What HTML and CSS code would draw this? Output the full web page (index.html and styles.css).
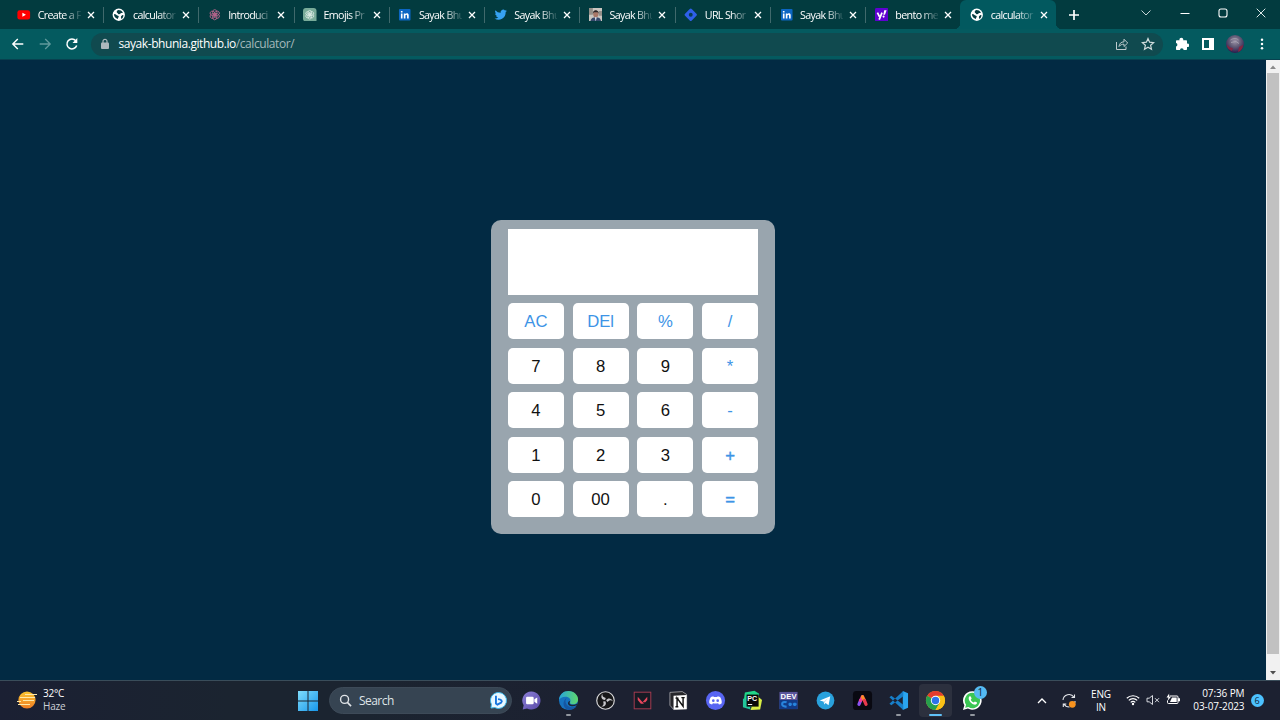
FILE: index.html
```html
<!DOCTYPE html>
<html lang="en">
<head>
<meta charset="utf-8">
<title>calculator</title>
<link rel="stylesheet" href="styles.css">
</head>
<body>
<svg class="defs" width="0" height="0">
  <defs>
    <linearGradient id="win" x1="0" y1="0" x2="1" y2="1"><stop offset="0" stop-color="#7fdcfb"/><stop offset="1" stop-color="#1796ea"/></linearGradient>
    <linearGradient id="sun" x1="0" y1="0" x2="0" y2="1"><stop offset="0" stop-color="#fbc531"/><stop offset="1" stop-color="#ee7d24"/></linearGradient>
    <linearGradient id="chat" x1="0" y1="0" x2="1" y2="1"><stop offset="0" stop-color="#8b7fd6"/><stop offset="1" stop-color="#5a4aa8"/></linearGradient>
    <linearGradient id="edgeTop" x1="0" y1="0" x2="1" y2="0"><stop offset="0" stop-color="#27a5dc"/><stop offset="1" stop-color="#5fd86b"/></linearGradient>
    <radialGradient id="avatar" cx=".5" cy=".35" r=".65"><stop offset="0" stop-color="#9d94a8"/><stop offset=".45" stop-color="#655e78"/><stop offset="1" stop-color="#281b4c"/></radialGradient>
    <symbol id="x" viewBox="0 0 8 8"><path d="M1 1l6 6M7 1L1 7" stroke="#fff" stroke-width="1.3" fill="none"/></symbol>
    <symbol id="globe" viewBox="0 0 14 14"><circle cx="7" cy="7" r="6.400" fill="#fff"/><path d="M2 6.300c1.200.2 2.200.4 3 1.200.7.7 2 .4 2 1.400 0 .8-.8 1-.8 2.500C3.700 11 2 9 2 6.300zM6.600 2.200c2 0 3.700.8 4.700 2.600-.8.300-1.500 0-2 .5-.7.700-1.200 1.500-2.300 1.200-.9-.2-.6-1.100-1.500-1.300-1.200-.3-.7-2.600 1.100-3zM11.800 7.200c.2 1.900-.8 3.500-2.300 4.200.5-1-.6-1.500-.2-2.500.4-1 1.300-1.700 2.500-1.700z" fill="#063c40"/></symbol>
    <symbol id="in" viewBox="0 0 14 14"><rect x="1" y="1" width="12" height="12" rx="1" fill="#0c66c3"/><path d="M3 5.600h1.700V11H3zM3 3h1.700v1.600H3zM6 5.600h1.600v.7c1-1.300 3.500-1 3.500 1.300V11H9.400V8c0-1.400-1.700-1.300-1.700 0v3H6z" fill="#fff"/></symbol>
    <symbol id="knot" viewBox="0 0 14 14"><g fill="none" stroke="currentColor" stroke-width=".9"><ellipse cx="7" cy="4.700" rx="2.300" ry="3"/><ellipse cx="7" cy="4.700" rx="2.300" ry="3" transform="rotate(60 7 7)"/><ellipse cx="7" cy="4.700" rx="2.300" ry="3" transform="rotate(120 7 7)"/><ellipse cx="7" cy="4.700" rx="2.300" ry="3" transform="rotate(180 7 7)"/><ellipse cx="7" cy="4.700" rx="2.300" ry="3" transform="rotate(240 7 7)"/><ellipse cx="7" cy="4.700" rx="2.300" ry="3" transform="rotate(300 7 7)"/></g></symbol>
  </defs>
</svg>

<header class="tabstrip">
  <div class="tab"><svg class="fav" viewBox="0 0 14 14"><rect x=".4" y="2.300" width="13.200" height="9.600" rx="2.300" fill="#f00"/><path d="M5.600 5l3.700 2.100-3.700 2.100z" fill="#fff"/></svg><span class="label">Create a F</span><svg class="close"><use href="#x"/></svg></div>
  <div class="tab"><svg class="fav"><use href="#globe"/></svg><span class="label">calculator</span><svg class="close"><use href="#x"/></svg></div>
  <div class="tab"><svg class="fav pink"><use href="#knot"/></svg><span class="label">Introduci</span><svg class="close"><use href="#x"/></svg></div>
  <div class="tab"><svg class="fav mint" viewBox="0 0 14 14"><path d="M3 0h8a3 3 0 0 1 3 3v11H3a3 3 0 0 1-3-3V3a3 3 0 0 1 3-3z" fill="#78ab99"/><use href="#knot" x="1" y="1" width="12" height="12"/></svg><span class="label">Emojis Pr</span><svg class="close"><use href="#x"/></svg></div>
  <div class="tab"><svg class="fav"><use href="#in"/></svg><span class="label">Sayak Bhu</span><svg class="close"><use href="#x"/></svg></div>
  <div class="tab"><svg class="fav" viewBox="0 0 24 24"><path d="M23 5.100a9 9 0 0 1-2.600.7 4.500 4.500 0 0 0 2-2.500 9 9 0 0 1-2.900 1.100 4.500 4.500 0 0 0-7.700 4.100A12.800 12.800 0 0 1 2.500 3.800a4.500 4.500 0 0 0 1.400 6 4.500 4.500 0 0 1-2-.6 4.500 4.500 0 0 0 3.600 4.500 4.500 4.500 0 0 1-2 .1 4.500 4.500 0 0 0 4.200 3.100A9 9 0 0 1 1 18.800 12.800 12.800 0 0 0 20.700 7.400 9 9 0 0 0 23 5.100z" fill="#36a2f2"/></svg><span class="label">Sayak Bhu</span><svg class="close"><use href="#x"/></svg></div>
  <div class="tab"><svg class="fav" viewBox="0 0 14 14"><rect width="14" height="14" fill="#c9c6c0"/><path d="M0 0h4v7H0zM10 3h4v5h-4z" fill="#938f88"/><path d="M1.500 14c.2-3.500 2.600-4.500 5.500-4.500s5.300 1 5.500 4.500z" fill="#35496b"/><ellipse cx="7" cy="6.300" rx="2.700" ry="3.600" fill="#a87868"/><path d="M4 6c-.4-5 6.400-5 6 0L9 4.300H5z" fill="#292629"/><path d="M6 9.600h2L7 14z" fill="#e3e6ef"/></svg><span class="label">Sayak Bhu</span><svg class="close"><use href="#x"/></svg></div>
  <div class="tab"><svg class="fav" viewBox="0 0 14 14"><rect x="2.100" y="2.100" width="9.800" height="9.800" rx="1.500" transform="rotate(45 7 7)" fill="#2f5fe8"/><circle cx="7" cy="7" r="2" fill="#063b52"/></svg><span class="label">URL Shor</span><svg class="close"><use href="#x"/></svg></div>
  <div class="tab"><svg class="fav"><use href="#in"/></svg><span class="label">Sayak Bhu</span><svg class="close"><use href="#x"/></svg></div>
  <div class="tab"><svg class="fav" viewBox="0 0 14 14"><rect width="14" height="14" rx="1.500" fill="#5f01d1"/><path d="M2.500 4.800l2.100 4.200M7.300 4.800L4.300 12" stroke="#fff" stroke-width="1.800" fill="none"/><path d="M9.600 2.300h2.500L10.300 7H8.600z" fill="#fff"/><circle cx="8.900" cy="8.900" r="1.100" fill="#fff"/></svg><span class="label">bento me</span><svg class="close"><use href="#x"/></svg></div>
  <div class="tab active"><svg class="fav"><use href="#globe"/></svg><span class="label">calculator</span><svg class="close"><use href="#x"/></svg></div>
  <svg class="plus" viewBox="0 0 12 12"><path d="M6 1v10M1 6h10" stroke="#fff" stroke-width="1.700"/></svg>
  <div class="window-buttons">
    <svg viewBox="0 0 12 12"><path d="M1.500 3.500L6 8l4.500-4.500" fill="none" stroke="#c5d5d6"/></svg>
    <svg viewBox="0 0 12 12"><path d="M1.500 6.500h9" stroke="#fff"/></svg>
    <svg viewBox="0 0 12 12"><rect x="2" y="2" width="8" height="8" rx="2" fill="none" stroke="#fff" stroke-width="1.100"/></svg>
    <svg viewBox="0 0 12 12"><path d="M1.700 1.700l8.600 8.600M10.300 1.700l-8.600 8.600" stroke="#dce6e6"/></svg>
  </div>
</header>

<nav class="toolbar">
  <div class="nav-buttons">
    <svg viewBox="0 0 14 14"><path d="M12.300 7H2M6.800 2L1.800 7l5 5" fill="none" stroke="#fff" stroke-width="1.400"/></svg>
    <svg viewBox="0 0 14 14"><path d="M1.700 7H12M7.200 2l5 5-5 5" fill="none" stroke="#609a9d" stroke-width="1.300"/></svg>
    <svg viewBox="0 0 14 14"><path d="M11.700 8.500a5 5 0 1 1-.9-4.800" fill="none" stroke="#fff" stroke-width="1.500"/><path d="M12.300 1v5H7.500z" fill="#fff"/></svg>
  </div>
  <div class="omnibox">
    <svg class="lock" viewBox="0 0 10 12"><rect x="1" y="4.500" width="8" height="6.500" rx="1" fill="#abb8bd"/><path d="M3 5V3.300a2 2 0 0 1 4 0V5" fill="none" stroke="#abb8bd" stroke-width="1.200"/></svg>
    <span class="url">sayak-bhunia.github.io<span class="path">/calculator/</span></span>
    <svg class="share" viewBox="0 0 14 14"><path d="M1.500 5v7.500h9.500V9.500M4 9.500c.4-3 2-4.600 5-4.700V2.200L12.700 6 9 9.500V7.200c-2 0-3.700.6-5 2.300z" fill="none" stroke="#bdcbcd" stroke-width="1"/></svg>
    <svg class="star" viewBox="0 0 14 14"><path d="M7 1.500l1.600 3.700 4 .4-3 2.700.9 4L7 10.200l-3.500 2.100.9-4-3-2.700 4-.4z" fill="none" stroke="#d0dcdc" stroke-width="1.200"/></svg>
  </div>
  <div class="actions">
    <svg viewBox="0 0 14 14"><path d="M1 4.200c0-.6.400-1 1-1h2.500a1.900 1.900 0 1 1 3.700 0H11c.6 0 1 .4 1 1v2.500a1.700 1.700 0 1 1 0 3.300v2c0 .6-.4 1-1 1H8.600a1.800 1.800 0 0 0-3.600 0H2c-.6 0-1-.4-1-1V9.600a1.800 1.800 0 0 0 0-3.500z" fill="#fff"/></svg>
    <svg viewBox="0 0 14 14"><path d="M1 1h12v12H1zM3 3v8h5V3z" fill="#fff" fill-rule="evenodd"/></svg>
    <svg class="avatar" viewBox="0 0 18 18"><circle cx="9" cy="9" r="9" fill="url(#avatar)"/><path d="M1 10c2 1 3 3 6 3l-1 3C3 15 1 13 1 10zM13 12l4-2c0 3-2 6-5 7z" fill="#842741"/><path d="M4.500 5c3-2 6-2 8 0M5 7.500l5-1 3 2" fill="none" stroke="#aaa5b3" stroke-width=".8"/></svg>
    <svg viewBox="0 0 14 14"><g fill="#fff"><circle cx="7" cy="2.700" r="1.250"/><circle cx="7" cy="7" r="1.250"/><circle cx="7" cy="11.300" r="1.250"/></g></svg>
  </div>
</nav>

<main class="page">
  <section class="stage">
    <div class="calculator">
      <div class="display"></div>
      <div class="keys">
        <button class="op">AC</button><button class="op">DEl</button><button class="op">%</button><button class="op">/</button>
        <button>7</button><button>8</button><button>9</button><button class="op">*</button>
        <button>4</button><button>5</button><button>6</button><button class="op">-</button>
        <button>1</button><button>2</button><button>3</button><button class="op bold">+</button>
        <button>0</button><button>00</button><button>.</button><button class="op bold">=</button>
      </div>
    </div>
  </section>
  <aside class="scrollbar">
    <svg viewBox="0 0 14 14"><path d="M4 9l3-3.500L10 9z" fill="#8a8a8a"/></svg>
    <div class="thumb"></div>
    <svg viewBox="0 0 14 14"><path d="M4 5l3 3.500L10 5z" fill="#505050"/></svg>
  </aside>
</main>

<footer class="taskbar">
  <div class="weather">
    <svg viewBox="0 0 20 20"><circle cx="10" cy="10" r="8.600" fill="url(#sun)"/><path d="M8 4.500h12M3 7.500h15M0 11.500h4M6 10.500h11M1 14.500h12" stroke="#ffe9a8" stroke-width="1.200"/></svg>
    <div class="weather-text"><span>32°C</span><span class="dim">Haze</span></div>
  </div>
  <svg class="start" viewBox="0 0 20 20"><path d="M0 0h9.500v9.500H0zM10.500 0H20v9.500h-9.500zM0 10.500h9.500V20H0zM10.500 10.500H20V20h-9.500z" fill="url(#win)"/></svg>
  <div class="search">
    <svg class="lens" viewBox="0 0 14 14"><circle cx="6" cy="5.800" r="4.300" fill="none" stroke="#e0e4e8" stroke-width="1.500"/><path d="M9 9l4 4" stroke="#e0e4e8" stroke-width="1.700"/></svg>
    <span>Search</span>
    <svg class="bing" viewBox="0 0 18 18"><path d="M9 .5a8.500 8.500 0 1 1-4 16L1 17l.5-4A8.500 8.500 0 0 1 9 .5z" fill="#e8f8ff" stroke="#36b7ed"/><path d="M6.300 4v8.300l1.500 1 4-2c1.700-1.600.1-3.500-3.300-3.800" fill="none" stroke="#1876df" stroke-width="2"/></svg>
  </div>
  <div class="apps">
    <div class="app"><svg viewBox="0 0 22 22"><path d="M11 1.500a9.500 9.500 0 1 1-4.700 17.800L1.800 20.500l1-4.500A9.500 9.500 0 0 1 11 1.500z" fill="url(#chat)"/><rect x="5.300" y="7.200" width="8" height="7.700" rx="1.300" fill="#fff"/><path d="M14 9.800l3-2v6.500l-3-2z" fill="#fff"/></svg></div>
    <div class="app running"><svg viewBox="0 0 22 22"><circle cx="11" cy="11" r="10" fill="#1672bf"/><path d="M1 10.500C1.500 4.500 5.600 1 11 1c6 0 10 4.500 10 8.800 0 3.400-2.300 5.200-5 5.200-2.300 0-4-.9-3.300-2.200C14 9.800 11.800 7 7.800 7 4.500 7 2 8.600 1 10.500z" fill="url(#edgeTop)"/><path d="M9 8.500c-3 4 .3 9.700 5.400 9.700 2 0 3.700-.5 5-1.500-1.500 2.800-5 4.500-8.400 4.300-6-.9-7-9.500-2-12.500z" fill="#1556a2"/><path d="M12.500 11.500c.3 1-.6 1.500-.4 2.300.5 1.700 4.300 2.500 8.400.3-.3.700-.7 1.400-1.200 2-4.200 2.300-9.700.3-8.700-3 .3-1 1-1.500 1.900-1.600z" fill="#1c2433"/></svg></div>
    <div class="app"><svg viewBox="0 0 22 22"><circle cx="11" cy="11" r="9.200" fill="#171719" stroke="#d8d8da" stroke-width="1.200"/><g fill="#c8c8cc"><path id="blade" d="M10.500 10.500C7 10.500 5.500 7 7.800 4c-.4 2.500.6 3.800 3.500 4.300z"/><use href="#blade" transform="rotate(120 11 11)"/><use href="#blade" transform="rotate(240 11 11)"/></g></svg></div>
    <div class="app"><svg viewBox="0 0 22 22"><rect x="2.300" y="2.300" width="17.400" height="17.400" fill="#151a24" stroke="#a83c50" stroke-width="1"/><path d="M6 7l6.500 7.500H9.300L6 10.500zM16 7v3.500l-2 2.400h-3z" fill="#e8465c"/></svg></div>
    <div class="app"><svg viewBox="0 0 22 22"><path d="M2 2.500l13-.8 4.500 3V20L6 20.500 2 16z" fill="#26262a" stroke="#c9c9cb" stroke-width=".7"/><path d="M5.800 6l13.700-.8V20L5.800 20.500z" fill="#fff"/><path d="M9.500 17.500v-9l6.300 8.500V8M7.800 8.500H11M14 8h3.500M7.800 17.500h3" fill="none" stroke="#111" stroke-width="1.500"/></svg></div>
    <div class="app"><svg viewBox="0 0 22 22"><circle cx="11" cy="11" r="10" fill="#5865f2"/><path d="M8.700 6.500l.5.900c1.200-.2 2.400-.2 3.600 0l.5-.9 2.500.8c1.300 2 2 4.300 1.700 6.500-1 .8-2 1.200-2.900 1.500l-.9-1.500c-1.800.6-3.600.6-5.400 0l-.9 1.500c-1-.3-2-.8-2.900-1.500-.2-2.200.3-4.500 1.700-6.500z" fill="#fff"/><circle cx="8.700" cy="11.200" r="1.400" fill="#5865f2"/><circle cx="13.300" cy="11.200" r="1.400" fill="#5865f2"/></svg></div>
    <div class="app"><svg viewBox="0 0 22 22"><path d="M3 2.500L13 .8l5 3-2 14.500L1 17z" fill="#21d789"/><path d="M17 7l4 3.500-2 10-10 .5 3-9z" fill="#d8ef45"/><path d="M1 9l6 2 2 9.500L1 18z" fill="#22c59a"/><rect x="4.800" y="4.800" width="12.600" height="12.600" fill="#090909"/><text class="pc" x="5.600" y="11.500">PC</text><path d="M6.200 15.200h4.500" stroke="#fff"/></svg></div>
    <div class="app"><svg viewBox="0 0 22 22"><rect x="1.500" y="2" width="19" height="18" fill="#5a559c"/><path d="M1.500 10.500h19V20h-19z" fill="#123a86"/><text class="dev" x="2.500" y="9.500" textLength="17">DEV</text><path d="M9 12.900c-6-2-6.500 5.400 0 4.400M11 15h3.500M12.700 13.300v3.500M15.500 15h4M17.500 13.300v3.500" fill="none" stroke="#2884dd" stroke-width="2.200"/></svg></div>
    <div class="app"><svg viewBox="0 0 22 22"><circle cx="11" cy="11" r="9.300" fill="#29a1dc"/><path d="M5 10.900l11-4.300-1.800 9.300-3-2.200-1.700 1.500-.3-3-1.400-.5z" fill="#fff"/><path d="M9.200 12.200l4.300-3.500-3.300 4.200-.6 2.100z" fill="#b9dcef"/></svg></div>
    <div class="app"><svg viewBox="0 0 22 22"><rect x="1" y="1" width="20" height="20" rx="3.500" fill="#090911"/><g fill="none" stroke-width="3.400" stroke-linecap="round"><path d="M7.300 15L9 11" stroke="#8b52f3"/><path d="M9 11l2-4" stroke="#ee3c9a"/><path d="M11 7l2 4" stroke="#ff8a2a"/><path d="M13 11l1.700 4" stroke="#e83a4c"/></g></svg></div>
    <div class="app running"><svg viewBox="0 0 22 22"><path d="M15.500 1l5.500 2.500v15L15.500 21z" fill="#2aa5ef"/><path d="M1.500 7.500L3.500 6 16 15.500V21zM1.500 14.500l2 1.500L16 6.500V1z" fill="#177fc9"/></svg></div>
    <div class="app current"><svg viewBox="0 0 22 22"><circle cx="11" cy="11" r="10" fill="#fbc116"/><path d="M11 11L2.340 6A10 10 0 0 1 19.660 6z" fill="#e33b2e"/><path d="M11 11L2.340 6A10 10 0 0 0 11 21l4.300-7.500z" fill="#269f4d"/><path d="M11 6h8.660A10 10 0 0 1 11 21l4.300-7.500z" fill="#fbc116"/><circle cx="11" cy="11" r="4.900" fill="#fff"/><circle cx="11" cy="11" r="3.900" fill="#2d72e9"/></svg></div>
    <div class="app running"><svg viewBox="0 0 22 22"><path d="M11 1.300A9.700 9.700 0 1 1 6.200 19.500L1 21l1.500-5A9.700 9.700 0 0 1 11 1.300z" fill="#fff"/><path d="M11 3a8 8 0 1 1-4.300 14.800L3.300 18.700l1-3.200A8 8 0 0 1 11 3z" fill="#3bc653"/><path d="M8 6.500c-2.700 2 .7 7.600 4.500 8.700 2 .5 3.200-.5 3.300-2.200l-2.300-1-1.200 1.200c-1.500-.6-2.500-1.700-3.100-3L10.100 9 9.200 6.700z" fill="#fff"/></svg><span class="badge">1</span></div>
  </div>
  <div class="tray">
    <svg class="chevron" viewBox="0 0 12 12"><path d="M2 8l4-4 4 4" fill="none" stroke="#fff" stroke-width="1.300"/></svg>
    <svg class="sync" viewBox="0 0 16 16"><path d="M2 7a6 6 0 0 1 11-2.800M13.500 1.500v3h-3M14 8a6 6 0 0 1-.3 2M8.500 14A6 6 0 0 1 3 11M2.300 14v-3h3" fill="none" stroke="#e4e6ea" stroke-width="1.100"/><circle cx="11.300" cy="11.300" r="3.400" fill="#f7931e"/></svg>
    <div class="lang"><span>ENG</span><span>IN</span></div>
    <div class="status">
      <svg viewBox="0 0 14 14"><path d="M.8 5.300a8.800 8.800 0 0 1 12.400 0M2.800 7.400a6 6 0 0 1 8.400 0M4.700 9.400a3.300 3.300 0 0 1 4.600 0" fill="none" stroke="#fff" stroke-width="1.200"/><circle cx="7" cy="11" r="1.200" fill="#fff"/></svg>
      <svg viewBox="0 0 14 14"><path d="M1 5.200h2.200L6.500 2.500v9L3.200 8.800H1zM9 5.200l4 4M13 5.200l-4 4" fill="none" stroke="#d6d9df" stroke-width="1"/></svg>
      <svg viewBox="0 0 14 14"><path d="M3.500 3H11a1 1 0 0 1 1 1v5.500a1 1 0 0 1-1 1H2.500a1 1 0 0 1-1-1v-2M12.500 5.500V8h1V5.500z" fill="none" stroke="#fff"/><path d="M6 4.500h4.700V9H4z" fill="#fff"/><path d="M3.200.5L.5 4.500h2L1.500 8 5 3.800H3z" fill="#fff"/></svg>
    </div>
    <div class="clock"><span>07:36 PM</span><span>03-07-2023</span></div>
    <span class="notices">6</span>
  </div>
</footer>
</body>
</html>
```
FILE: styles.css
```css
* { box-sizing: border-box; }
body { margin: 0; width: 1280px; height: 720px; overflow: hidden; display: flex; flex-direction: column; background: #022a43; font-family: "Open Sans", "Noto Sans", sans-serif; }
svg { display: block; flex: none; }
.defs { position: absolute; }

.tabstrip { height: 29px; flex: none; display: flex; align-items: center; padding-left: 8.700px; background: #023b3f; }
.tab { position: relative; width: 95.300px; height: 29px; flex: none; display: flex; align-items: center; padding-left: 8.500px; }
.tab::after { content: ""; position: absolute; right: 0; top: 7px; width: 1px; height: 16px; background: #40696c; }
.tab:nth-child(10)::after, .tab.active::after { display: none; }
.fav { width: 13.500px; height: 13.500px; }
.pink { color: #b5658c; }
.mint { color: #dcebe6; }
.label { width: 43px; margin-left: 7px; white-space: nowrap; color: #fff; font-size: 10.700px; letter-spacing: -0.650px; line-height: 16px; -webkit-mask-image: linear-gradient(90deg, #000 60%, transparent 105%); mask-image: linear-gradient(90deg, #000 60%, transparent 105%); }
.close { width: 8px; height: 8px; margin-left: 6px; }
.tab.active { width: 96.300px; margin-left: -1.500px; padding-left: 10px; background: #02595f; border-radius: 6px 6px 0 0; }
.tab.active::before { content: ""; position: absolute; left: -6px; right: -6px; bottom: 0; height: 6px; background: radial-gradient(circle at 0 0, transparent 6px, #02595f 6.500px) left / 6px 6px no-repeat, radial-gradient(circle at 100% 0, transparent 6px, #02595f 6.500px) right / 6px 6px no-repeat; }
.plus { width: 12px; height: 12px; margin-left: 12px; }
.window-buttons { margin-left: auto; display: flex; gap: 26.200px; padding: 0 13px 4px 0; }
.window-buttons svg { width: 12px; height: 12px; }

.toolbar { height: 31px; flex: none; display: flex; align-items: center; background: #045a5f; border-bottom: 1px solid #08414f; }
.nav-buttons { display: flex; gap: 13px; padding-left: 11px; width: 91px; }
.nav-buttons svg { width: 14px; height: 14px; }
.omnibox { width: 1072px; height: 23px; border-radius: 12px; background: #104a4f; display: flex; align-items: center; padding: 0 8px 0 9px; }
.lock { width: 10px; height: 12px; }
.url { margin-left: 8.500px; color: #fff; font-size: 12px; letter-spacing: -0.430px; line-height: 18px; }
.path { color: #a4b9bb; }
.share { width: 14px; height: 14px; margin-left: auto; }
.star { width: 14px; height: 14px; margin-left: 12px; }
.actions { display: flex; align-items: center; padding-left: 11.500px; gap: 12.100px; }
.actions svg { width: 14px; height: 14px; }
.actions .avatar { width: 18px; height: 18px; margin: 0 -1px; }

.page { height: 620px; flex: none; display: flex; }
.stage { width: 1266px; display: flex; justify-content: center; align-items: flex-start; padding-top: 160px; }
.calculator { width: 283.500px; height: 313.500px; padding: 9px 16.700px 0; border-radius: 10px; background: #99a5ae; }
.display { height: 66.400px; background: #fff; }
.keys { display: grid; grid-template-columns: repeat(4, 56px); grid-auto-rows: 36px; column-gap: 8.700px; row-gap: 8.400px; margin-top: 8px; }
button { border: 0; padding: 1px 0 0; border-radius: 5px; background: #fff; color: #111; font: 16.700px/35px "Liberation Sans", Arial, sans-serif; }
.op { color: #3d94e6; }
.bold { -webkit-text-stroke: 0.400px #3d94e6; }
.scrollbar { width: 14px; background: #f1f1f1; display: flex; flex-direction: column; }
.scrollbar svg { width: 14px; height: 14px; }
.thumb { height: 581px; margin: -1px 1px 0; background: #c1c1c1; }
.thumb + svg { margin-top: auto; }

.taskbar { height: 40px; flex: none; display: flex; align-items: center; background: linear-gradient(90deg, #1b2033, #1b2430 18%, #1b2430 28%, #1c2131 45%); border-top: 1px solid #3a4d5a; color: #fff; font-size: 10px; }
.weather { width: 298px; display: flex; align-items: center; padding: 0 0 2px 17px; gap: 6px; }
.weather svg { width: 20px; height: 20px; }
.weather-text, .lang, .clock { display: flex; flex-direction: column; line-height: 13px; letter-spacing: -0.200px; }
.dim { color: #ccd0d6; }
.start { width: 20px; height: 20px; }
.search { width: 183px; height: 27px; margin-left: 11px; border-radius: 14px; background: #364452; border: 1px solid #3d4a58; display: flex; align-items: center; padding: 0 4px 0 9px; font-size: 12px; letter-spacing: -0.550px; color: #dfe3e7; }
.lens { width: 13px; height: 13px; margin-right: 7px; }
.bing { width: 17px; height: 17px; margin-left: auto; }
.apps { display: flex; margin-left: 1.600px; }
.app { position: relative; width: 36.700px; height: 39px; display: flex; align-items: center; justify-content: center; }
.app > svg { position: relative; width: 21px; height: 21px; }
.running::after, .current::after { content: ""; position: absolute; bottom: 4px; left: 16px; width: 5px; height: 2px; border-radius: 1px; background: #92979f; }
.current::before { content: ""; position: absolute; inset: 3px 2px; border-radius: 4px; background: #2c303e; }
.current::after { left: 12px; width: 13px; background: #60c1f8; }
.badge { position: absolute; left: 20px; top: 5px; width: 13px; height: 13px; border-radius: 50%; background: #55baf3; color: #10263a; font-size: 10px; line-height: 13px; text-align: center; }
.pc { font: bold 7.500px "Liberation Sans", sans-serif; fill: #fff; }
.dev { font: bold 8px "Liberation Sans", sans-serif; fill: #fff; }
.tray { margin-left: auto; display: flex; align-items: center; padding-right: 16.500px; }
.chevron { width: 12px; height: 12px; }
.sync { width: 16px; height: 16px; margin-left: 13px; }
.lang { width: 22px; margin-left: 13px; align-items: center; }
.status { display: flex; gap: 6px; margin-left: 14px; padding-bottom: 2px; }
.status svg { width: 14px; height: 14px; }
.clock { width: 53px; margin-left: 11.500px; align-items: flex-end; white-space: nowrap; letter-spacing: -0.100px; padding-bottom: 1px; }
.notices { width: 13px; height: 13px; margin-left: 6px; border-radius: 50%; background: #4cc2ff; color: #10263a; font-size: 9px; line-height: 13px; text-align: center; }
```
